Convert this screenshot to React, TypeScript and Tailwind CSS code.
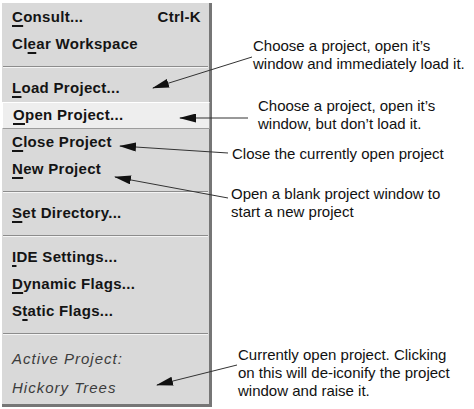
import React from "react";

type Item = { pre?: string; key: string; post: string; accel?: string; active?: boolean };

const sections: Item[][] = [
  [
    { key: "C", post: "onsult...", accel: "Ctrl-K" },
    { pre: "Cl", key: "e", post: "ar Workspace" },
  ],
  [
    { key: "L", post: "oad Project..." },
    { key: "O", post: "pen Project...", active: true },
    { key: "C", post: "lose Project" },
    { key: "N", post: "ew Project" },
  ],
  [{ key: "S", post: "et Directory..." }],
  [
    { key: "I", post: "DE Settings..." },
    { key: "D", post: "ynamic Flags..." },
    { pre: "S", key: "t", post: "atic Flags..." },
  ],
];

function Separator() {
  return (
    <div className="h-[17px] flex flex-col justify-center px-[1px]">
      <div className="h-px bg-[#8c8c8c]" />
      <div className="h-px bg-[#f4f4f4]" />
    </div>
  );
}

function MenuRow({ item }: { item: Item }) {
  return (
    <div
      className={`flex items-center justify-between h-[27px] pl-[10px] pr-[8px] ${
        item.active
          ? "bg-[#eeeeee] border-t border-l border-white border-b border-r border-b-[#9c9c9c] border-r-[#9c9c9c] -mr-[1px]"
          : ""
      }`}
    >
      <span>
        {item.pre}
        <span className="underline underline-offset-[3px] decoration-[1.5px]">{item.key}</span>
        {item.post}
      </span>
      {item.accel && <span>{item.accel}</span>}
    </div>
  );
}

const notes = [
  { x: 253, y: 37, lines: ["Choose a project, open it\u2019s", "window and immediately load it."] },
  { x: 258, y: 97, lines: ["Choose a project, open it\u2019s", "window, but don\u2019t load it."] },
  { x: 232, y: 145, lines: ["Close the currently open project"] },
  { x: 231, y: 185, lines: ["Open a blank project window to", "start a new project"] },
  { x: 238, y: 346, lines: ["Currently open project. Clicking", "on this will de-iconify the project", "window and raise it."] },
];

const arrows = [
  { x1: 252, y1: 57, x2: 153, y2: 88 },
  { x1: 248, y1: 118, x2: 180, y2: 118 },
  { x1: 228, y1: 153, x2: 120, y2: 146 },
  { x1: 228, y1: 198, x2: 115, y2: 177 },
  { x1: 237, y1: 365, x2: 157, y2: 385 },
];

export default function App() {
  return (
    <div className="relative w-[474px] h-[409px] bg-white overflow-hidden">
      <div
        className="ml-[2px] mt-[3px] w-[210px] bg-[#d9d9d9] border-r-[3px] border-b-[3px] border-[#767676] text-[15px] font-bold tracking-[0.3px] text-[#141414] flex flex-col pt-px"
        style={{ fontFamily: '"Liberation Sans", Arial, sans-serif' }}
      >
        {sections.map((sec, i) => (
          <div key={i} className="flex flex-col">
            {i > 0 && <Separator />}
            {sec.map((item, j) => (
              <MenuRow key={j} item={item} />
            ))}
          </div>
        ))}
        <Separator />
        <div className="flex flex-col font-normal italic tracking-[1px] text-[#3c3c3c] pl-[10px] pt-[2px] pb-[2px]">
          <div className="h-[30px] flex items-center">Active Project:</div>
          <div className="h-[28px] flex items-center">Hickory Trees</div>
        </div>
      </div>

      {notes.map((n, i) => (
        <div
          key={i}
          className="absolute text-[15px] leading-[18px] text-[#111]"
          style={{ left: n.x, top: n.y, fontFamily: '"Liberation Sans", Arial, sans-serif' }}
        >
          {n.lines.map((l, k) => (
            <div key={k} className="whitespace-nowrap">{l}</div>
          ))}
        </div>
      ))}

      <svg className="absolute inset-0 pointer-events-none" width="474" height="409">
        <defs>
          <marker
            id="ah"
            markerWidth="17"
            markerHeight="9"
            refX="16"
            refY="4.5"
            orient="auto"
            markerUnits="userSpaceOnUse"
          >
            <path d="M0,0 L17,4.5 L0,9 z" fill="#111" />
          </marker>
        </defs>
        {arrows.map((a, i) => (
          <line
            key={i}
            x1={a.x1}
            y1={a.y1}
            x2={a.x2}
            y2={a.y2}
            stroke="#333"
            strokeWidth="1"
            markerEnd="url(#ah)"
          />
        ))}
      </svg>
    </div>
  );
}
